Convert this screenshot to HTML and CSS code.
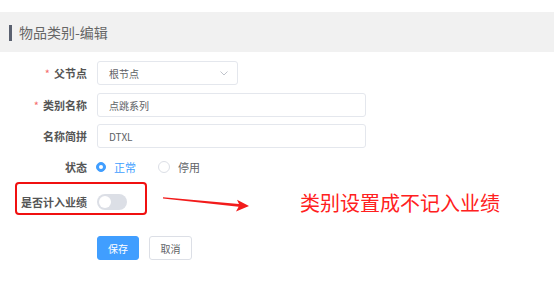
FILE: index.html
```html
<!DOCTYPE html>
<html lang="zh-CN">
<head>
  <meta charset="UTF-8">
  <title>物品类别-编辑</title>
  <link rel="stylesheet" href="styles.css">
</head>
<body>
  <!-- Page header -->
  <div class="page-header">
    <span class="header-bar"></span>
    <span class="header-title">物品类别-编辑</span>
  </div>

  <!-- Edit form -->
  <div class="form">
    <div class="form-row">
      <label class="form-label"><span class="req">*</span>父节点</label>
      <div class="select">
        <span>根节点</span>
        <svg class="select-arrow" width="8" height="5" viewBox="0 0 8 5">
          <path d="M0.5 0.5 L4 4 L7.5 0.5" fill="none" stroke="#c0c4cc" stroke-width="1"/>
        </svg>
      </div>
    </div>

    <div class="form-row row-name">
      <label class="form-label"><span class="req">*</span>类别名称</label>
      <div class="input">点跳系列</div>
    </div>

    <div class="form-row row-short">
      <label class="form-label">名称简拼</label>
      <div class="input">DTXL</div>
    </div>

    <div class="form-row row-status">
      <label class="form-label">状态</label>
      <div class="radio-group">
        <span class="radio checked"></span><span class="radio-text active">正常</span>
        <span class="radio"></span><span class="radio-text">停用</span>
      </div>
    </div>

    <div class="note-row">
      <div class="mark-box">
        <label class="form-label mark-label">是否计入业绩</label>
        <span class="switch"><span class="switch-knob"></span></span>
      </div>
      <svg class="note-arrow" width="90" height="22" viewBox="0 0 90 22">
        <polygon points="3,5.3 79,12 77,7.8 89,14 76,19.5 78.6,14.8 3,6.6" fill="#f21b1b"/>
      </svg>
      <span class="note-text">类别设置成不记入业绩</span>
    </div>

    <div class="actions">
      <button class="btn btn-primary">保存</button>
      <button class="btn">取消</button>
    </div>
  </div>
</body>
</html>
```
FILE: styles.css
```css
body {
  margin: 0;
  background-color: #fff;
  font-family: "Noto Sans CJK SC", "Noto Sans", sans-serif;
  color: #606266;
}

.page-header {
  margin-top: 12px;
  height: 40px;
  background-color: #f1f1f1;
  display: flex;
  align-items: center;
  padding-left: 9px;
}

.header-bar {
  width: 3px;
  height: 16px;
  background-color: #5a6170;
  margin-right: 7px;
  margin-top: 1px;
}

.header-title {
  font-size: 14px;
  color: #666;
}

.form {
  padding-top: 9px;
}

.form-row {
  display: flex;
  align-items: center;
  height: 24px;
}

.row-name {
  margin-top: 8px;
}

.row-short {
  margin-top: 7px;
}

.row-status {
  margin-top: 7px;
}

.form-label {
  width: 97px;
  box-sizing: border-box;
  padding-right: 10px;
  text-align: right;
  font-size: 11px;
  font-weight: bold;
  color: #555;
}

.req {
  color: #f56c6c;
  margin-right: 4px;
  font-weight: normal;
}

.select,
.input {
  height: 24px;
  box-sizing: border-box;
  border: 1px solid #e4e7ed;
  border-radius: 3px;
  padding: 0 11px;
  font-size: 10px;
  color: #606266;
  display: flex;
  align-items: center;
}

.select {
  width: 141px;
  justify-content: space-between;
  padding-right: 9px;
}

.input {
  width: 269px;
}

.radio-group {
  display: flex;
  align-items: center;
  font-size: 11px;
}

.radio {
  width: 10px;
  height: 10px;
  box-sizing: border-box;
  border: 1px solid #dcdfe6;
  border-radius: 50%;
  margin-left: -1px;
}

.radio + .radio-text + .radio {
  width: 12px;
  height: 12px;
  margin-left: 22px;
}

.radio.checked {
  background-color: #409eff;
  border-color: #409eff;
  position: relative;
}

.radio.checked::after {
  content: "";
  position: absolute;
  left: 2px;
  top: 2px;
  width: 4px;
  height: 4px;
  border-radius: 50%;
  background-color: #fff;
}

.radio-text {
  margin-left: 8px;
  color: #606266;
}

.radio-text.active {
  color: #409eff;
}

.note-row {
  display: flex;
  align-items: flex-start;
  margin-top: 3px;
}

.mark-box {
  margin-left: 15px;
  width: 132px;
  height: 33px;
  box-sizing: border-box;
  border: 2px solid #f01010;
  border-radius: 4px;
  display: flex;
  align-items: center;
  padding-top: 6px;
}

.mark-label {
  width: 80px;
}

.switch {
  width: 30px;
  height: 16px;
  border-radius: 8px;
  background-color: #dcdfe6;
  display: flex;
  align-items: center;
  padding-left: 2px;
  box-sizing: border-box;
}

.switch-knob {
  width: 12px;
  height: 12px;
  border-radius: 50%;
  background-color: #fff;
}

.note-arrow {
  margin-left: 13px;
  margin-top: 10px;
}

.note-text {
  margin-left: 50px;
  margin-top: 9px;
  font-size: 20px;
  line-height: 24px;
  color: #ff2020;
}

.actions {
  display: flex;
  gap: 10px;
  margin-top: 21px;
  padding-left: 97px;
}

.btn {
  height: 24px;
  width: 43px;
  padding: 0;
  border: 1px solid #dcdfe6;
  border-radius: 3px;
  background-color: #fff;
  font-family: "Noto Sans CJK SC", "Noto Sans", sans-serif;
  font-size: 10px;
  color: #606266;
}

.btn-primary {
  width: 42px;
  background-color: #409eff;
  border-color: #409eff;
  color: #fff;
}
```
